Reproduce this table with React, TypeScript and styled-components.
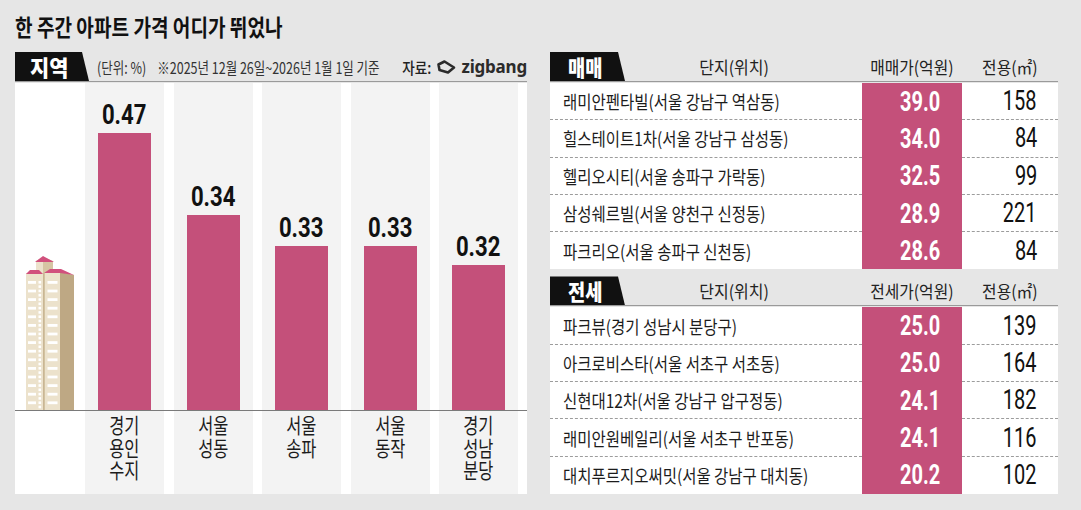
import React from 'react'
import styled, { createGlobalStyle } from 'styled-components'

const GlobalStyle = createGlobalStyle`
  body {
    margin: 0;
    background: #e6e6e6;
    font-family: "Noto Sans CJK KR", "Noto Sans", sans-serif;
    color: #1c1c1c;
  }
`

const PINK = '#c4507a'

const Page = styled.div`
  width: 1081px;
  height: 510px;
  box-sizing: border-box;
  padding: 15px 23px 0 15px;
  overflow: hidden;
`

// the print font is a condensed gothic, so squeeze glyphs horizontally
const Squeeze = styled.span<{ $x?: number; $origin?: string }>`
  display: inline-block;
  white-space: nowrap;
  transform: scaleX(${(p) => p.$x ?? 0.8});
  transform-origin: ${(p) => p.$origin ?? 'left'} center;
`

const Title = styled.h1`
  margin: 0 0 14px;
  font-size: 23px;
  line-height: 23px;
  font-weight: 700;
  color: #111;
`

const Main = styled.div`
  display: flex;
  gap: 23px;
`

const LeftPanel = styled.section`
  width: 512px;
`

const RightPanel = styled.section`
  width: 508px;
  display: flex;
  flex-direction: column;
  gap: 7px;
`

const SectionHead = styled.div`
  display: flex;
  align-items: stretch;
  height: 29px;
  border-bottom: 1px solid #9a9a9a;
  box-sizing: content-box;
`

const Tab = styled.div<{ $w: number }>`
  width: ${(p) => p.$w}px;
  flex: none;
  background: #111;
  color: #fff;
  font-weight: 900;
  font-size: 22px;
  line-height: 29px;
  clip-path: polygon(0 0, calc(100% - 7px) 0, 100% 100%, 0 100%);
  display: flex;
  justify-content: center;
  padding-right: 5px;
  box-sizing: border-box;
`

const Note = styled.div`
  flex: 1 1 0;
  min-width: 0;
  display: flex;
  align-items: center;
  margin-left: 8px;
  font-size: 16px;
  color: #333;
`

const Source = styled.div`
  flex: none;
  display: flex;
  align-items: center;
  gap: 4px;
  font-size: 16px;
  font-weight: 500;
  color: #222;
`

const Brand = styled.span`
  font-family: "Noto Sans", sans-serif;
  font-weight: 700;
  font-size: 17px;
  color: #2b2b2b;
  letter-spacing: -0.2px;
`

const ChartBody = styled.div`
  background: #fff;
  margin-top: 1px;
`

const ChartGrid = styled.div<{ $h: number; $line?: boolean }>`
  display: grid;
  grid-template-columns: 60.5px repeat(5, 79px);
  column-gap: 9.5px;
  padding-right: 9px;
  height: ${(p) => p.$h}px;
  box-sizing: border-box;
  border-bottom: ${(p) => (p.$line ? '1px solid #7a7a7a' : 'none')};
`

const Column = styled.div<{ $shade?: boolean; $top?: boolean }>`
  background: ${(p) => (p.$shade ? '#f3f3f3' : 'transparent')};
  display: flex;
  flex-direction: column;
  align-items: center;
  justify-content: ${(p) => (p.$top ? 'flex-start' : 'flex-end')};
`

const IllustrationCell = styled.div`
  display: flex;
  align-items: flex-end;
  justify-content: flex-end;
  padding-right: 1px;
`

const Bar = styled.div`
  width: 53px;
  background: ${PINK};
`

const Value = styled.div`
  font-family: Roboto, "Liberation Sans", sans-serif;
  font-weight: 700;
  font-size: 27px;
  line-height: 27px;
  color: #111;
  margin-bottom: 4px;
`

const Region = styled.div`
  padding-top: 2px;
  font-size: 21px;
  line-height: 22.5px;
  color: #1c1c1c;
  text-align: center;
  white-space: pre-line;
`

const RegionText = styled.span`
  display: inline-block;
  transform: scaleX(0.78);
  transform-origin: center;
`

const HeadLabel = styled.div<{ $pad?: number }>`
  flex: 1;
  display: flex;
  align-items: center;
  justify-content: center;
  padding-right: ${(p) => p.$pad ?? 0}px;
  font-size: 17px;
  color: #222;
`

const HeadCell = styled.div<{ $w: number }>`
  width: ${(p) => p.$w}px;
  flex: none;
  display: flex;
  align-items: center;
  justify-content: center;
  font-size: 17px;
  color: #222;
`

const Rows = styled.div`
  background: #fff;
  margin-top: 1px;
`

const Row = styled.div`
  display: grid;
  grid-template-columns: 312px 100px 96px;
  height: 37.3px;
`

const NameCell = styled.div<{ $last?: boolean }>`
  display: flex;
  align-items: center;
  padding-left: 13px;
  font-size: 18px;
  color: #1c1c1c;
  border-bottom: ${(p) => (p.$last ? 'none' : '1px dashed #9c9c9c')};
`

const PriceCell = styled.div`
  display: flex;
  align-items: center;
  justify-content: flex-end;
  padding-right: 22px;
  background: ${PINK};
  color: #fff;
  font-family: Roboto, "Liberation Sans", sans-serif;
  font-weight: 700;
  font-size: 27px;
`

const AreaCell = styled.div<{ $last?: boolean }>`
  display: flex;
  align-items: center;
  justify-content: flex-end;
  padding-right: 21px;
  font-family: Roboto, "Liberation Sans", sans-serif;
  font-size: 27px;
  color: #111;
  border-bottom: ${(p) => (p.$last ? 'none' : '1px dashed #9c9c9c')};
`

const bars = [
  { v: '0.47', h: 277, label: '경기\n용인\n수지' },
  { v: '0.34', h: 195, label: '서울\n성동' },
  { v: '0.33', h: 164, label: '서울\n송파' },
  { v: '0.33', h: 164, label: '서울\n동작' },
  { v: '0.32', h: 145, label: '경기\n성남\n분당' },
]

const sales = [
  ['래미안펜타빌(서울 강남구 역삼동)', '39.0', '158'],
  ['힐스테이트1차(서울 강남구 삼성동)', '34.0', '84'],
  ['헬리오시티(서울 송파구 가락동)', '32.5', '99'],
  ['삼성쉐르빌(서울 양천구 신정동)', '28.9', '221'],
  ['파크리오(서울 송파구 신천동)', '28.6', '84'],
]

const leases = [
  ['파크뷰(경기 성남시 분당구)', '25.0', '139'],
  ['아크로비스타(서울 서초구 서초동)', '25.0', '164'],
  ['신현대12차(서울 강남구 압구정동)', '24.1', '182'],
  ['래미안원베일리(서울 서초구 반포동)', '24.1', '116'],
  ['대치푸르지오써밋(서울 강남구 대치동)', '20.2', '102'],
]

const ZigbangMark = () => (
  <svg width="22" height="16" viewBox="0 0 22 16">
    <path
      d="M3.5 5.5 L9.5 2.5 L19 8.5 L13 13.5 L4.5 11 Z"
      fill="none"
      stroke="#2b2b2b"
      strokeWidth="2.6"
      strokeLinejoin="round"
    />
  </svg>
)

const Building = () => {
  const rows = Array.from({ length: 15 }, (_, i) => 25 + i * 8.6)
  return (
    <svg width="49" height="154" viewBox="0 0 49 154">
      <polygon points="10,5 17,1 27,5 27,154 10,154" fill="#d6c5a3" />
      <rect x="10" y="5" width="7" height="149" fill="#ece2cc" />
      <polygon points="9,6 17,0 28,6" fill="#d1507d" />
      <polygon points="34,16 48,19 48,154 34,154" fill="#bea884" />
      <rect x="0" y="17" width="17" height="137" fill="#ece2cc" />
      <polygon points="0,18 4,14 13,14 17,18" fill="#d1507d" />
      <rect x="18.5" y="17" width="15.5" height="137" fill="#ece2cc" />
      <polygon points="18,17 24,13 35,13 48,19 34,17" fill="#d1507d" />
      <rect x="17" y="17" width="1.6" height="137" fill="#c9b694" />
      {rows.map((y) => (
        <g key={y} fill="#fff">
          <rect x="2" y={y} width="8" height="2.8" />
          <rect x="12.5" y={y} width="2.6" height="2.6" />
          <rect x="12.5" y={y + 4.3} width="2.6" height="2.6" />
          <rect x="21.5" y={y} width="10" height="2.8" />
        </g>
      ))}
    </svg>
  )
}

const Table = ({ tab, price, data }: { tab: string; price: string; data: string[][] }) => (
  <div>
    <SectionHead>
      <Tab $w={75}>
        <Squeeze $x={0.85} $origin="center">{tab}</Squeeze>
      </Tab>
      <HeadLabel $pad={18}>
        <Squeeze $x={0.94} $origin="center">단지(위치)</Squeeze>
      </HeadLabel>
      <HeadCell $w={100}>
        <Squeeze $x={0.93} $origin="center">{price}</Squeeze>
      </HeadCell>
      <HeadCell $w={96}>
        <Squeeze $x={0.93} $origin="center">전용(㎡)</Squeeze>
      </HeadCell>
    </SectionHead>
    <Rows>
      {data.map(([name, p, a], i) => {
        const last = i === data.length - 1
        return (
          <Row key={name}>
            <NameCell $last={last}>
              <Squeeze $x={0.86}>{name}</Squeeze>
            </NameCell>
            <PriceCell>
              <Squeeze $x={0.74} $origin="right">{p}</Squeeze>
            </PriceCell>
            <AreaCell $last={last}>
              <Squeeze $x={0.74} $origin="right">{a}</Squeeze>
            </AreaCell>
          </Row>
        )
      })}
    </Rows>
  </div>
)

export default function App() {
  return (
    <>
      <GlobalStyle />
      <Page>
        <Title>
          <Squeeze $x={0.83}>한 주간 아파트 가격 어디가 뛰었나</Squeeze>
        </Title>
        <Main>
          <LeftPanel>
            <SectionHead>
              <Tab $w={74}>
                <Squeeze $x={0.95} $origin="center">지역</Squeeze>
              </Tab>
              <Note>
                <Squeeze $x={0.78}>
                  (단위: %)&nbsp;&nbsp;&nbsp; ※2025년 12월 26일~2026년 1월 1일 기준
                </Squeeze>
              </Note>
              <Source>
                <Squeeze $x={0.85} $origin="right">자료:</Squeeze>
                <ZigbangMark />
                <Brand>zigbang</Brand>
              </Source>
            </SectionHead>
            <ChartBody>
              <ChartGrid $h={328} $line>
                <IllustrationCell>
                  <Building />
                </IllustrationCell>
                {bars.map((b, i) => (
                  <Column key={i} $shade>
                    <Value>
                      <Squeeze $x={0.82} $origin="center">{b.v}</Squeeze>
                    </Value>
                    <Bar style={{ height: b.h }} />
                  </Column>
                ))}
              </ChartGrid>
              <ChartGrid $h={83}>
                <Column />
                {bars.map((b, i) => (
                  <Column key={i} $shade $top>
                    <Region>
                      <RegionText>{b.label}</RegionText>
                    </Region>
                  </Column>
                ))}
              </ChartGrid>
            </ChartBody>
          </LeftPanel>
          <RightPanel>
            <Table tab="매매" price="매매가(억원)" data={sales} />
            <Table tab="전세" price="전세가(억원)" data={leases} />
          </RightPanel>
        </Main>
      </Page>
    </>
  )
}
